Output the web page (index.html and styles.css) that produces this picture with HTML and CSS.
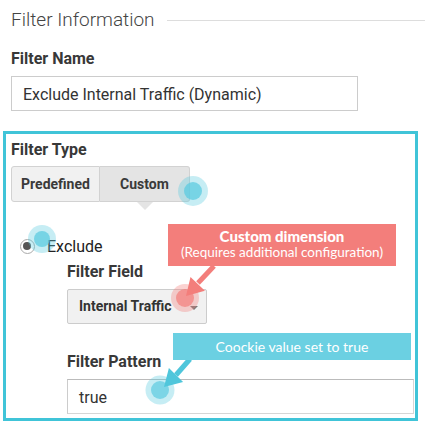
FILE: index.html
```html
<!DOCTYPE html>
<html lang="en">
<head>
  <meta charset="UTF-8" />
  <meta name="viewport" content="width=device-width, initial-scale=1.0"/>
  <title>Filter Information</title>
  <link rel="stylesheet" href="styles.css">
</head>
<body>
  <div class="section-head">
    <h2>Filter Information</h2>
    <span class="rule"></span>
  </div>

  <label class="label">Filter Name</label>
  <div class="input name-input">Exclude Internal Traffic (Dynamic)</div>

  <div class="highlight-box">
    <label class="label">Filter Type</label>
    <div class="btn-group">
      <div class="btn predefined">Predefined</div>
      <div class="btn custom active">Custom</div>
    </div>

    <div class="radio-row">
      <span class="radio"></span>
      <span>Exclude</span>
    </div>

    <div class="nested">
      <label class="label">Filter Field</label>
      <div class="select">Internal Traffic<span class="caret"></span></div>

      <label class="label pattern-label">Filter Pattern</label>
      <div class="input pattern-input">true</div>
    </div>
  </div>

  <!-- annotations -->
  <svg class="marks" width="425" height="426" viewBox="0 0 425 426">
    <circle cx="193" cy="191" r="15" fill="#5ccbe0" opacity="0.35"/>
    <circle cx="193" cy="191" r="9" fill="#5ccbe0" opacity="0.75"/>
    <circle cx="42" cy="239" r="14" fill="#5ccbe0" opacity="0.35"/>
    <circle cx="42" cy="239" r="8" fill="#5ccbe0" opacity="0.75"/>
    <circle cx="185" cy="298" r="14" fill="#f37e7b" opacity="0.35"/>
    <circle cx="185" cy="298" r="9" fill="#f37e7b" opacity="0.7"/>
    <circle cx="160" cy="390" r="14.5" fill="#5ccbe0" opacity="0.35"/>
    <circle cx="160" cy="390" r="9" fill="#5ccbe0" opacity="0.7"/>

    <line x1="214" y1="266" x2="198" y2="283" stroke="#f37e7b" stroke-width="5"/>
    <polygon points="186,296 190.5,276.9 204.9,290.7" fill="#f37e7b"/>

    <line x1="190" y1="359" x2="176" y2="375" stroke="#4fc6db" stroke-width="5"/>
    <polygon points="164,387 168.9,367.9 183.1,382.1" fill="#4fc6db"/>
  </svg>

  <div class="tip tip-red">
    <strong>Custom dimension</strong>
    <span>(Requires additional configuration)</span>
  </div>
  <div class="tip tip-cyan">Coockie value set to true</div>
</body>
</html>
```

FILE: styles.css
```css
body {
  margin: 0;
  font-family: 'Roboto', 'Liberation Sans', sans-serif;
  color: #333;
  background: #fff;
  position: relative;
  width: 425px;
  height: 426px;
  overflow: hidden;
}
.section-head {
  display: flex;
  align-items: center;
  margin: 8px 0 0 11px;
}
.section-head h2 {
  margin: 0;
  font-size: 19px;
  line-height: 24px;
  font-weight: 300;
  color: #444;
}
.rule {
  flex: 1;
  border-top: 1px solid #ddd;
  margin: 1px 0 0 12px;
}
.label {
  display: block;
  font-size: 16px;
  line-height: 18px;
  font-weight: 700;
  color: #383838;
}
body > .label {
  margin: 18px 0 0 11px;
}
.input {
  box-sizing: border-box;
  height: 35px;
  border: 1px solid #ccc;
  padding: 3px 11px 0;
  font-size: 16px;
  line-height: 30px;
  color: #333;
  background: #fff;
}
.name-input {
  width: 347px;
  margin: 8px 0 0 11px;
}
.highlight-box {
  width: 415px;
  height: 290px;
  box-sizing: border-box;
  margin: 20px 0 0 3px;
  border: 3px solid #40c4d8;
  padding: 7px 0 4px 5px;
}
.btn-group {
  display: flex;
  margin-top: 7px;
  height: 36px;
}
.btn {
  box-sizing: border-box;
  height: 36px;
  border: 1px solid #d2d2d2;
  background: #f1f1f1;
  font-size: 14px;
  font-weight: 700;
  line-height: 34px;
  text-align: center;
  color: #3a3a3a;
}
.btn.predefined {
  width: 89px;
  border-radius: 3px 0 0 3px;
}
.btn.custom {
  width: 90px;
  border-left: none;
  border-radius: 0 3px 3px 0;
  position: relative;
}
.btn.active {
  background: #e4e4e4;
}
.btn.active::after {
  content: "";
  position: absolute;
  left: 37px;
  top: 35px;
  border-left: 8px solid transparent;
  border-right: 8px solid transparent;
  border-top: 8px solid #e4e4e4;
}
.radio-row {
  display: flex;
  align-items: center;
  gap: 12px;
  margin: 34px 0 0 9px;
  height: 20px;
  font-size: 16px;
  color: #222;
}
.radio {
  box-sizing: border-box;
  width: 15px;
  height: 15px;
  border: 1px solid #aaa;
  border-radius: 50%;
  background: #fff;
  display: flex;
  align-items: center;
  justify-content: center;
}
.radio::before {
  content: "";
  width: 8px;
  height: 8px;
  border-radius: 50%;
  background: #555;
  margin-left: -1px;
}
.nested {
  margin: 7px 0 0 56px;
}
.select {
  box-sizing: border-box;
  width: 140px;
  height: 35px;
  margin-top: 8px;
  border: 1px solid #ccc;
  border-radius: 2px;
  background: #f1f1f1;
  padding: 0 0 0 11px;
  font-size: 14px;
  font-weight: 700;
  line-height: 33px;
  color: #333;
  display: flex;
  align-items: center;
}
.caret {
  margin: 2px 0 0 19px;
  border-left: 4px solid transparent;
  border-right: 4px solid transparent;
  border-top: 4px solid #777;
}
.pattern-label {
  margin-top: 29px;
}
.pattern-input {
  width: 347px;
  margin-top: 8px;
  border-top-color: #bbb;
  border-right-color: #d6d6d6;
  border-bottom-color: #d6d6d6;
}
.marks {
  position: absolute;
  top: 0;
  left: 0;
  pointer-events: none;
}
.tip {
  position: absolute;
  box-sizing: border-box;
  color: #fff;
  text-align: center;
  font-family: 'Lato', 'Open Sans', sans-serif;
}
.tip-red {
  left: 168px;
  top: 224px;
  width: 228px;
  height: 42px;
  background: #f37e7b;
  padding-top: 4px;
}
.tip-red strong {
  display: block;
  font-size: 15px;
  line-height: 16px;
  font-weight: 900;
}
.tip-red span {
  display: block;
  font-size: 13.5px;
  line-height: 16px;
}
.tip-cyan {
  left: 173px;
  top: 333px;
  width: 238px;
  height: 27px;
  background: #6bd0e2;
  font-size: 14px;
  line-height: 27px;
}
```
